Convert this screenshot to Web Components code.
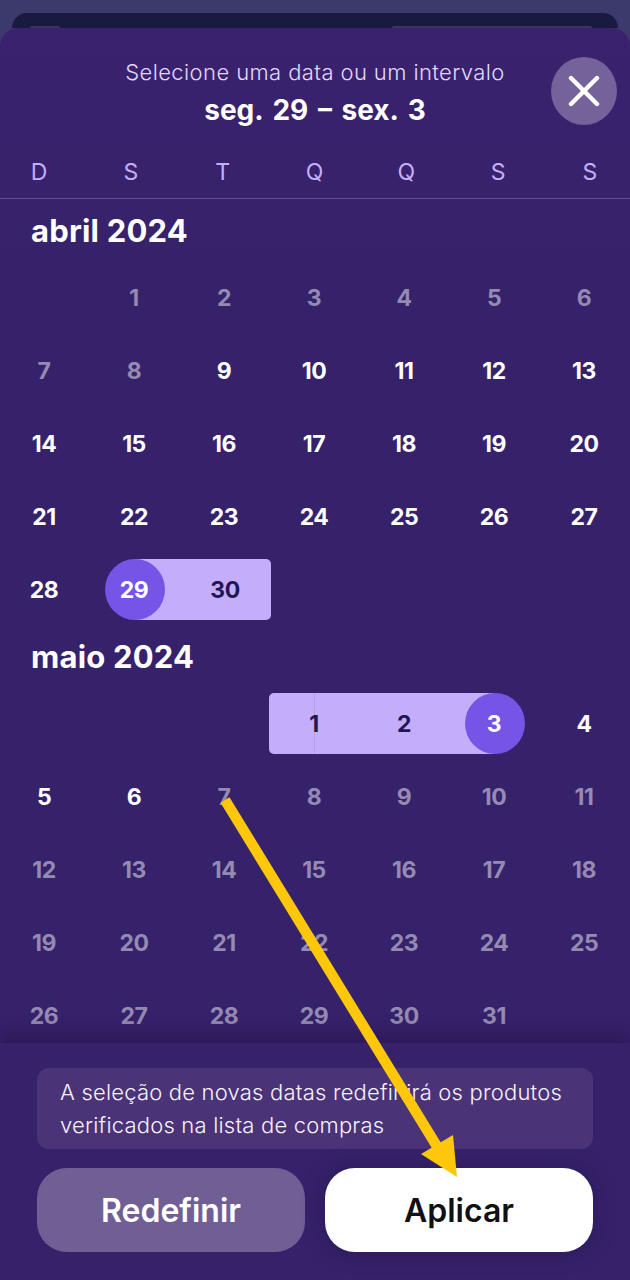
<!DOCTYPE html>
<html lang="pt">
<head>
<meta charset="utf-8">
<title>Calendário</title>
<style>
  html, body {
    margin: 0;
    height: 1280px;
    overflow: hidden;
    background: #3c3a6c;
    font-family: 'Inter', 'Noto Sans', sans-serif;
  }
</style>
</head>
<body>
<date-sheet>
  <sheet-header slot="header" hint="Selecione uma data ou um intervalo" range="seg. 29 – sex. 3"></sheet-header>
  <month-grid label="abril 2024" first="1" days="30" active-from="9" active-to="30" range-from="29" range-to="30" edge="start"></month-grid>
  <month-grid label="maio 2024" first="3" days="31" active-from="1" active-to="6" range-from="1" range-to="3" edge="end"></month-grid>
  <sheet-footer slot="footer">A seleção de novas datas redefinirá os produtos verificados na lista de compras</sheet-footer>
</date-sheet>
<arrow-mark></arrow-mark>

<script>
/**
 * The bottom sheet that holds everything.
 */
customElements.define('date-sheet',
  class extends HTMLElement {
    constructor() {
      super()
      this.attachShadow({ mode: 'open' }).innerHTML = `
<style>
  :host {
    display: block;
    padding-top: 13px;
  }
  .behind {
    display: flex;
    justify-content: space-between;
    align-items: flex-end;
    height: 15px;
    margin: 0 12px;
    padding: 0 26px 0 18px;
    border-radius: 28px 28px 0 0;
    background: #1a1a40;
  }
  .behind i {
    display: block;
    height: 2px;
    border-radius: 3px 3px 0 0;
    background: #3d3560;
  }
  .behind i:first-child {
    width: 30px;
  }
  .behind i:last-child {
    width: 200px;
  }
  .sheet {
    display: flex;
    flex-direction: column;
    height: 1252px;
    border-radius: 18px 18px 0 0;
    background: linear-gradient(#3a226e, #36226a 20%);
    overflow: hidden;
  }
  .months {
    flex: 1;
    min-height: 0;
    overflow: hidden;
  }
</style>
<div class="behind"><i></i><i></i></div>
<div class="sheet">
  <slot name="header"></slot>
  <div class="months"><slot></slot></div>
  <slot name="footer"></slot>
</div>`
    }
  }
)

/**
 * Title, chosen range, close button and the weekday row.
 */
customElements.define('sheet-header',
  class extends HTMLElement {
    constructor() {
      super()
      const days = ['D', 'S', 'T', 'Q', 'Q', 'S', 'S']
      this.attachShadow({ mode: 'open' }).innerHTML = `
<style>
  :host {
    display: block;
    color: #fff;
  }
  .top {
    display: flex;
    flex-direction: column;
    align-items: center;
    height: 112px;
    padding-top: 28px;
    box-sizing: border-box;
  }
  .hint {
    font-size: 22px;
    line-height: 32px;
    letter-spacing: 0.4px;
    font-weight: 300;
    color: #e2d8fb;
  }
  .range {
    margin-top: 5px;
    font-size: 28px;
    line-height: 34px;
    font-weight: 700;
    word-spacing: 3px;
  }
  .close {
    align-self: flex-end;
    width: 66px;
    height: 68px;
    margin: -70px 13px 0 0;
    border-radius: 50%;
    background: #75629a;
    display: flex;
    align-items: center;
    justify-content: center;
  }
  .days {
    display: flex;
    justify-content: space-between;
    height: 59px;
    padding: 17px 30px 0 29px;
    box-sizing: border-box;
    border-bottom: 1px solid #63489b;
    color: #c4aef8;
    font-size: 23px;
    line-height: 30px;
  }
  .days span {
    width: 20px;
    text-align: center;
  }
</style>
<div class="top">
  <div class="hint">${this.getAttribute('hint')}</div>
  <div class="range">${this.getAttribute('range')}</div>
  <div class="close">
    <svg width="32" height="32" viewBox="0 0 32 32" fill="none" stroke="#fff" stroke-width="4.4" stroke-linecap="round">
      <path d="M3 3 L29 29 M29 3 L3 29"/>
    </svg>
  </div>
</div>
<div class="days">${days.map((d) => `<span>${d}</span>`).join('')}</div>`
    }
  }
)

/**
 * One month: the title and a seven column grid of days.
 */
customElements.define('month-grid',
  class extends HTMLElement {
    constructor() {
      super()
      const num = (name) => parseInt(this.getAttribute(name), 10)
      const edge = this.getAttribute('edge')
      const cells = []
      for (let i = 0; i < num('first'); i++) {
        cells.push('<div class="cell"></div>')
      }
      for (let d = 1; d <= num('days'); d++) {
        const classes = ['cell']
        const isFrom = d === num('range-from')
        const isTo = d === num('range-to')
        if (d < num('active-from') || d > num('active-to')) classes.push('off')
        if (d >= num('range-from') && d <= num('range-to')) classes.push('in')
        if (isFrom) classes.push(edge === 'start' ? 'start' : 'open')
        if (isTo) classes.push(edge === 'start' ? 'shut' : 'end')
        cells.push(`<div class="${classes.join(' ')}"><span class="band"><span class="n">${d}</span></span></div>`)
      }
      this.attachShadow({ mode: 'open' }).innerHTML = `
<style>
  :host {
    display: block;
    color: #fff;
  }
  h2 {
    margin: 0;
    padding: 12px 0 0 31px;
    font-size: 31px;
    line-height: 40px;
    font-weight: 700;
    letter-spacing: 0.2px;
  }
  :host([edge="end"]) h2 {
    padding-top: 11px;
  }
  .grid {
    display: grid;
    grid-template-columns: repeat(7, 90px);
    grid-auto-rows: 73px;
    margin: 10px 0 0 -1px;
    font-size: 23px;
    font-weight: 700;
    letter-spacing: -0.5px;
  }
  .cell {
    display: flex;
    align-items: center;
    justify-content: center;
  }
  .off {
    color: #958ab2;
  }
  .band {
    display: flex;
    align-items: center;
    justify-content: center;
    height: 61px;
    width: 100%;
  }
  .n {
    display: flex;
    align-items: center;
    justify-content: center;
  }
  .in {
    color: #241650;
  }
  .in .band {
    background: #c4aefb;
  }
  .start .band {
    background: linear-gradient(to right, transparent 50%, #c4aefb 50%);
  }
  .end .band {
    background: linear-gradient(to right, #c4aefb 50%, transparent 50%);
  }
  .start .n, .end .n {
    box-sizing: border-box;
    width: 60px;
    height: 61px;
    margin-left: 2px;
    padding-right: 2px;
    border-radius: 50%;
    background: #7554e6;
    color: #fff;
  }
  .shut .band {
    width: calc(100% + 2px);
    margin-right: -2px;
    border-radius: 0 5px 5px 0;
  }
  .open .band {
    border-radius: 5px 0 0 5px;
    background: linear-gradient(to right, #c4aefb 45px, #b5a0ee 45px, #b5a0ee 46px, #c4aefb 46px);
  }
</style>
<h2>${this.getAttribute('label')}</h2>
<div class="grid">${cells.join('')}</div>`
    }
  }
)

/**
 * Notice and the two action buttons.
 */
customElements.define('sheet-footer',
  class extends HTMLElement {
    constructor() {
      super()
      this.attachShadow({ mode: 'open' }).innerHTML = `
<style>
  :host {
    display: block;
    position: relative;
    height: 237px;
    box-sizing: border-box;
    padding: 25px 37px 0;
    background: #36226a;
    box-shadow: 0 -10px 16px rgba(30, 16, 70, 0.45);
    color: #fff;
  }
  .notice {
    height: 81px;
    box-sizing: border-box;
    padding: 8px 23px;
    border-radius: 12px;
    background: #4a3377;
    font-size: 22px;
    line-height: 33px;
    letter-spacing: 0.2px;
    font-weight: 300;
    color: #f6f2fd;
  }
  .actions {
    display: grid;
    grid-template-columns: 1fr 1fr;
    gap: 20px;
    margin-top: 19px;
  }
  .btn {
    height: 84px;
    border-radius: 30px;
    display: flex;
    align-items: center;
    justify-content: center;
    font-size: 32px;
    font-weight: 600;
  }
  .reset {
    background: #705f95;
  }
  .apply {
    background: #fff;
    color: #111;
    box-shadow: 0 0 22px rgba(25, 12, 60, 0.4);
  }
</style>
<div class="notice"><slot></slot></div>
<div class="actions">
  <div class="btn reset">Redefinir</div>
  <div class="btn apply">Aplicar</div>
</div>`
    }
  }
)

/**
 * The yellow annotation arrow drawn over the screenshot.
 */
customElements.define('arrow-mark',
  class extends HTMLElement {
    constructor() {
      super()
      this.attachShadow({ mode: 'open' }).innerHTML = `
<style>
  :host {
    display: block;
    position: absolute;
    left: 0;
    top: 0;
    width: 630px;
    height: 1280px;
    pointer-events: none;
  }
</style>
<svg width="630" height="1280" viewBox="0 0 630 1280">
  <path d="M225 800 L438 1148" stroke="#fec70a" stroke-width="10.5" fill="none"/>
  <path d="M421 1154 L453 1135 L457 1177 Z" fill="#fec70a"/>
</svg>`
    }
  }
)
</script>
</body>
</html>
